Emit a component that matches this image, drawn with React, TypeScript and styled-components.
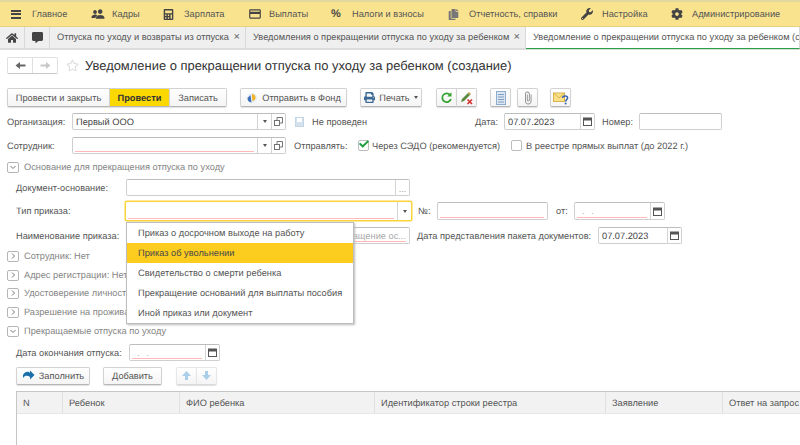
import React from "react";
import styled, { createGlobalStyle } from "styled-components";
import { FaHome, FaCalculator, FaWrench, FaCog, FaPrint, FaCommentAlt, FaRegStar, FaCheck, FaCopy } from "react-icons/fa";
import { IoPeople } from "react-icons/io5";
import { MdPayment, MdAttachFile } from "react-icons/md";

const Global = createGlobalStyle`
  html, body { margin: 0; padding: 0; background: #fff; }
  body { width: 800px; height: 445px; overflow: hidden; font-family: "Liberation Sans", Arial, sans-serif; font-size: 9.25px; color: #4c4c4c; text-rendering: geometricPrecision; }
  * { box-sizing: border-box; }
`;

const Page = styled.div`
  position: relative; width: 800px; height: 445px; overflow: hidden;
  display: flex; flex-direction: column;
`;
const TopBar = styled.div`
  height: 27px; flex: none; display: flex; align-items: center;
  background: #f9e38f; border-top: 2px solid #e3d7a0; border-bottom: 1px solid #e6d27e;
`;
const Section = styled.div<{ $w: number; $icon: number }>`
  width: ${p => p.$w}px; flex: none; display: flex; align-items: center; height: 100%; color: #555;
  white-space: nowrap; font-size: 9.25px;
  & > span:first-child { width: ${p => p.$icon}px; flex: none; display: flex; padding-left: ${p => p.$icon - 21}px; }
`;
const Pct = styled.span`font-weight: 700; font-size: 11px; color: #444; `;
const Burger = styled.div`
  width: 10px; height: 9px; border-top: 2px solid #444; border-bottom: 2px solid #444; position: relative;
  &::after { content: ""; position: absolute; left: 0; right: 0; top: 1.5px; height: 2px; background: #444; }
`;
const TabBar = styled.div`
  height: 23px; flex: none; display: flex; background: #efefef; border-bottom: 2px solid #dcdcdc;
`;
const IconTab = styled.div`
  width: 25px; flex: none; display: flex; align-items: center; justify-content: center; color: #444;
  border-right: 1px solid #d9d9d9;
`;
const Tab = styled.div<{ $w: number; $active?: boolean }>`
  width: ${p => p.$w}px; flex: none; display: flex; align-items: center; justify-content: space-between;
  padding: 0 5px 1px 7px; white-space: nowrap; overflow: hidden; font-size: 9.25px; color: #555;
  border-right: 1px solid #d9d9d9;
  ${p => p.$active ? "background:#fff; border-bottom: 1.5px solid #27a047; margin-bottom: -1px; padding-right: 0;" : ""}
`;
const Close = styled.span`font-size: 11px; color: #666; margin-left: 4px;`;
const TitleRow = styled.div`
  height: 38px; flex: none; display: flex; align-items: center; padding: 0 0 8px 7px;
`;
const NavGroup = styled.div`
  display: flex; width: 51px; height: 17px; border: 1px solid #e0e0e0; border-bottom-color: #c8c8c8; border-radius: 2px; background: #fff;
`;
const NavBtn = styled.div`
  flex: 1; display: flex; align-items: center; justify-content: center;
  & + & { border-left: 1px solid #e0e0e0; }
`;
const Star = styled.div`margin-left: 8px; color: #dedede; display: flex; font-size: 13px;`;
const Title = styled.h1`
  margin: 0 0 0 6px; font-weight: 400; font-size: 12.95px; color: #333; white-space: nowrap;
`;
const CommandBar = styled.div`
  height: 19px; margin-top: 0; flex: none; display: flex; padding-left: 7px;
`;
const BtnGroup = styled.div<{ $ml?: number }>`
  display: flex; margin-left: ${p => p.$ml ?? 0}px; height: 19px;
`;
const Btn = styled.div<{ $w: number; $main?: boolean; $h?: number; $light?: boolean }>`
  width: ${p => p.$w}px; height: ${p => p.$h ?? 19}px; flex: none; display: flex; align-items: center; justify-content: center; gap: 4px;
  border: 1px solid ${p => p.$light ? "#e6e6e6" : "#d2d2d2"}; border-bottom-color: ${p => p.$light ? "#d8d8d8" : "#b5b5b5"}; margin-left: -1px;
  background: ${p => p.$main ? "#fbd800" : "linear-gradient(#fff,#f4f4f4)"};
  color: ${p => p.$main ? "#333" : "#555"}; font-weight: ${p => p.$main ? 700 : 400};
  font-size: 9.25px; white-space: nowrap; box-shadow: 0 1px 1px #e2e2e2;
  &:first-child { margin-left: 0; border-radius: 2px 0 0 2px; }
  &:last-child { border-radius: 0 2px 2px 0; }
  &:only-child { border-radius: 2px; }
`;
const Row = styled.div<{ $h: number; $mt: number; $pl?: number }>`
  height: ${p => p.$h}px; margin-top: ${p => p.$mt}px; padding-left: ${p => p.$pl ?? 7}px; flex: none; display: flex; align-items: center;
`;
const Label = styled.div<{ $w?: number; $ml?: number }>`
  ${p => p.$w ? `width:${p.$w}px;` : ""} flex: none; margin-left: ${p => p.$ml ?? 0}px; white-space: nowrap; color: #555; font-size: 9.25px;
`;
const Field = styled.div<{ $w: number; $ml?: number; $focus?: boolean; $h?: number }>`
  width: ${p => p.$w}px; height: ${p => p.$h ?? 17}px; flex: none; margin-left: ${p => p.$ml ?? 0}px; display: flex;
  border: 1px solid ${p => p.$focus ? "#fbd33a" : "#cfcfcf"}; ${p => p.$focus ? "box-shadow: 0 0 0 0.5px #fbd33a;" : "border-top-color:#bdbdbd;"}
  border-radius: 2px; background: #fff;
`;
const FieldBody = styled.div<{ $req?: boolean; $end?: boolean }>`
  flex: 1; min-width: 0; padding: 0 3px; display: flex; align-items: center; position: relative; font-size: 9.25px; color: #444; white-space: nowrap; overflow: hidden;
  ${p => p.$end ? "justify-content: flex-end;" : ""}
  ${p => p.$req ? `&::after { content:""; position:absolute; left:2px; right:3px; bottom:1px; height:1px; background:#ffb9b9; }` : ""}
`;
const FieldBtn = styled.div<{ $w?: number }>`
  width: ${p => p.$w ?? 14}px; flex: none; border-left: 1px solid #d4d4d4; display: flex; align-items: center; justify-content: center; color: #555;
`;
const Caret = styled.div`
  width: 0; height: 0; border-left: 2.5px solid transparent; border-right: 2.5px solid transparent; border-top: 3px solid #555;
`;
const Dots = styled.span`color: #999; font-size: 9px; line-height: 1; margin-top: 3px;`;
const Placeholder = styled.span`color: #aaa;`;
const Mask = styled.span`color: #aaa; padding-left: 4px; letter-spacing: 2px;`;
const Check = styled.div`
  width: 11px; height: 11px; flex: none; position: relative;
  border: 1px solid #bdbdbd; border-radius: 2px; background: #fff; color: #1f9d3f;
  & > svg { position: absolute; left: 0; top: -2px; }
`;
const Disk = styled.div`
  width: 9px; height: 10px; flex: none; margin-left: 9px; background: #d3e2ee; border: 1px solid #c4d5e3; position: relative;
  &::before { content: ""; position: absolute; left: 1px; right: 1px; top: 0; height: 4px; background: #fff; }
`;
const Toggle = styled.div`
  width: 12px; height: 11px; flex: none; border: 1px solid #b5b5b5; border-radius: 2px; display: flex; align-items: center; justify-content: center; background: #fff;
`;
const GroupTitle = styled.div`margin-left: 5px; color: #858585; font-size: 9.25px; white-space: nowrap;`;
const Dropdown = styled.div`
  position: absolute; left: 126px; top: 222px; width: 228px; height: 102px; background: #fff; z-index: 2;
  border: 1px solid #bdbdbd; box-shadow: 1px 1px 2px #bbb;
`;
const Option = styled.div<{ $sel?: boolean }>`
  height: 20px; display: flex; align-items: center; padding-left: 11px; font-size: 9.25px; white-space: nowrap; color: #555;
  ${p => p.$sel ? "background:#fccc1e; color:#4a4a4a;" : ""}
`;
const Table = styled.div`
  margin: 6px 0 0 16px; flex: 1; border-top: 1px solid #c6c6c6; border-left: 1px solid #c6c6c6;
`;
const Head = styled.div`
  height: 22px; display: flex; background: #f2f2f2; border-bottom: 1px solid #e6e6e6;
`;
const Col = styled.div<{ $w: number }>`
  width: ${p => p.$w}px; flex: none; display: flex; align-items: center; padding-left: 6px; font-size: 9.25px; color: #555; white-space: nowrap;
  border-right: 1px solid #e0e0e0;
  &:last-child { border-right: none; }
`;

const Chev = ({ open }: { open?: boolean }) => (
  <svg width="8" height="8" viewBox="0 0 8 8" fill="none" stroke="#777" strokeWidth="1">
    <path d={open ? "M1.5 3 L4 5.5 L6.5 3" : "M3 1.5 L5.5 4 L3 6.5"} />
  </svg>
);
const Cal = () => (
  <svg width="9" height="9" viewBox="0 0 9 9">
    <rect x="0.5" y="1" width="8" height="7.5" fill="#fff" stroke="#555" />
    <rect x="0.5" y="1" width="8" height="2.5" fill="#555" />
  </svg>
);
const OpenIco = () => (
  <svg width="9" height="9" viewBox="0 0 9 9" fill="none" stroke="#666" strokeWidth="0.9">
    <rect x="0.5" y="3.5" width="5" height="5" />
    <path d="M3 3.5V0.5H8.5V6H5.5" />
  </svg>
);
const Fund = () => (
  <svg width="12" height="12" viewBox="0 0 12 12">
    <circle cx="6" cy="6" r="5" fill="#e8eef6" />
    <path d="M1.5 6a4.5 4.5 0 0 0 4 4.5L4.5 3z" fill="#3f6fb5" />
    <path d="M6 2c2 0 3.5 1.6 3.5 3.6S8 9 6.5 9L6 5z" fill="#f0b429" />
  </svg>
);
const Refresh = () => (
  <svg width="13" height="13" viewBox="0 0 13 13" fill="none">
    <path d="M10.3 4.2A4.4 4.4 0 1 0 10.9 8" stroke="#35a32f" strokeWidth="1.8" />
    <path d="M11.5 1.2v4.2H7.3z" fill="#35a32f" />
  </svg>
);
const PenX = () => (
  <svg width="15" height="14" viewBox="0 0 15 14">
    <path d="M2 11 L3 8 L9 2 L11 4 L5 10z" fill="#5a8a3c" />
    <path d="M9 2 L10 1 L12 3 L11 4z" fill="#c79a3a" />
    <path d="M8.5 8.5 L13 13 M13 8.5 L8.5 13" stroke="#d2322d" strokeWidth="1.6" />
  </svg>
);
const ListDoc = () => (
  <svg width="10" height="14" viewBox="0 0 10 14">
    <rect x="0.5" y="0.5" width="9" height="13" fill="#dbe6f2" stroke="#8eaccb" />
    <path d="M2 3.5h6M2 6h6M2 8.5h6M2 11h6" stroke="#7f9fc2" />
  </svg>
);
const Mail = () => (
  <svg width="16" height="14" viewBox="0 0 16 14">
    <rect x="0.5" y="2" width="11" height="8.5" fill="#fbe08a" stroke="#d9b24c" />
    <path d="M0.5 2 L6 7 L11.5 2" fill="none" stroke="#d9b24c" />
    <path d="M9.6 7 C9.6 4.4 14.6 4.4 14.6 7 C14.6 8.6 12.6 8.6 12.6 10.4" fill="none" stroke="#3a62b0" strokeWidth="1.5" />
    <circle cx="12.6" cy="12.6" r="1" fill="#3a62b0" />
  </svg>
);
const Arrow = ({ dir, color }: { dir: "up" | "down"; color: string }) => (
  <svg width="11" height="11" viewBox="0 0 11 11">
    <path d={dir === "up" ? "M5.5 1 L10 6 H7 V10 H4 V6 H1z" : "M5.5 10 L10 5 H7 V1 H4 V5 H1z"} fill={color} />
  </svg>
);
const NavArrow = ({ left, color }: { left?: boolean; color: string }) => (
  <svg width="11" height="9" viewBox="0 0 11 9">
    <path d={left ? "M0.5 4.5 L5 1 V3.5 H10.5 V5.5 H5 V8z" : "M10.5 4.5 L6 1 V3.5 H0.5 V5.5 H6 V8z"} fill={color} />
  </svg>
);
const FillIco = () => (
  <svg width="13" height="11" viewBox="0 0 13 11">
    <path d="M1 5 C3 1 7 1 8 3 L8 0.5 L12.5 5 L8 9.5 L8 7 C6 5.5 3 5 1 8z" fill="#1c6fa8" />
  </svg>
);

const sections = [
  { w: 84, icon: 32, text: "Главное", ico: <Burger /> },
  { w: 72, icon: 28, text: "Кадры", ico: <IoPeople size={14} color="#444" /> },
  { w: 85, icon: 28, text: "Зарплата", ico: <FaCalculator size={11} color="#444" /> },
  { w: 83, icon: 28, text: "Выплаты", ico: <MdPayment size={14} color="#444" /> },
  { w: 114, icon: 28, text: "Налоги и взносы", ico: <Pct>%</Pct> },
  { w: 133, icon: 31, text: "Отчетность, справки", ico: <FaCopy size={11} color="#777" /> },
  { w: 90, icon: 31, text: "Настройка", ico: <FaWrench size={12} color="#444" /> },
  { w: 139, icon: 31, text: "Администрирование", ico: <FaCog size={12} color="#444" /> },
];
const options = ["Приказ о досрочном выходе на работу", "Приказ об увольнении", "Свидетельство о смерти ребенка", "Прекращение оснований для выплаты пособия", "Иной приказ или документ"];
const cols: [string, number][] = [["N", 46], ["Ребенок", 117], ["ФИО ребенка", 195], ["Идентификатор строки реестра", 231], ["Заявление", 117], ["Ответ на запрос", 90]];

const Group = ({ open, text, mt }: { open?: boolean; text: string; mt: number }) => (
  <Row $h={12} $mt={mt}>
    <Toggle><Chev open={open} /></Toggle>
    <GroupTitle>{text}</GroupTitle>
  </Row>
);

export default function App() {
  return (
    <Page>
      <Global />
      <TopBar>
        {sections.map(s => (
          <Section key={s.text} $w={s.w} $icon={s.icon}>
            <span>{s.ico}</span>
            <span>{s.text}</span>
          </Section>
        ))}
      </TopBar>
      <TabBar>
        <IconTab><FaHome size={12} /></IconTab>
        <IconTab><FaCommentAlt size={11} /></IconTab>
        <Tab $w={196}>Отпуска по уходу и возвраты из отпуска<Close>×</Close></Tab>
        <Tab $w={280}>Уведомления о прекращении отпуска по уходу за ребенком<Close>×</Close></Tab>
        <Tab $w={274} $active>Уведомление о прекращении отпуска по уходу за ребенком (создание)</Tab>
      </TabBar>
      <TitleRow>
        <NavGroup>
          <NavBtn><NavArrow left color="#666" /></NavBtn>
          <NavBtn><NavArrow color="#c8c8c8" /></NavBtn>
        </NavGroup>
        <Star><FaRegStar /></Star>
        <Title>Уведомление о прекращении отпуска по уходу за ребенком (создание)</Title>
      </TitleRow>
      <CommandBar>
        <BtnGroup>
          <Btn $w={103}>Провести и закрыть</Btn>
          <Btn $w={61} $main>Провести</Btn>
          <Btn $w={58}>Записать</Btn>
        </BtnGroup>
        <BtnGroup $ml={13}>
          <Btn $w={107}><Fund />Отправить в Фонд</Btn>
        </BtnGroup>
        <BtnGroup $ml={13}>
          <Btn $w={62}><FaPrint size={11} color="#3b6a94" />Печать<Caret /></Btn>
        </BtnGroup>
        <BtnGroup $ml={14}>
          <Btn $w={21}><Refresh /></Btn>
          <Btn $w={21}><PenX /></Btn>
        </BtnGroup>
        <BtnGroup $ml={13}>
          <Btn $w={21}><ListDoc /></Btn>
        </BtnGroup>
        <BtnGroup $ml={6}>
          <Btn $w={21}><MdAttachFile size={14} color="#888" /></Btn>
        </BtnGroup>
        <BtnGroup $ml={12}>
          <Btn $w={21}><Mail /></Btn>
        </BtnGroup>
      </CommandBar>
      <Row $h={17} $mt={6}>
        <Label $w={65}>Организация:</Label>
        <Field $w={214}>
          <FieldBody>Первый ООО</FieldBody>
          <FieldBtn><Caret /></FieldBtn>
          <FieldBtn><OpenIco /></FieldBtn>
        </Field>
        <Disk />
        <Label $w={163} $ml={8}>Не проведен</Label>
        <Label $w={29}>Дата:</Label>
        <Field $w={91}>
          <FieldBody>07.07.2023</FieldBody>
          <FieldBtn><Cal /></FieldBtn>
        </Field>
        <Label $w={37} $ml={7}>Номер:</Label>
        <Field $w={83} />
      </Row>
      <Row $h={17} $mt={7}>
        <Label $w={65}>Сотрудник:</Label>
        <Field $w={214}>
          <FieldBody $req />
          <FieldBtn><Caret /></FieldBtn>
          <FieldBtn><OpenIco /></FieldBtn>
        </Field>
        <Label $w={64} $ml={8}>Отправлять:</Label>
        <Check><FaCheck size={10} /></Check>
        <Label $w={139} $ml={3}>Через СЭДО (рекомендуется)</Label>
        <Check />
        <Label $ml={4}>В реестре прямых выплат (до 2022 г.)</Label>
      </Row>
      <Group open text="Основание для прекращения отпуска по уходу" mt={7} />
      <Row $h={17} $mt={6} $pl={16}>
        <Label $w={110}>Документ-основание:</Label>
        <Field $w={284}>
          <FieldBody />
          <FieldBtn><Dots>...</Dots></FieldBtn>
        </Field>
      </Row>
      <Row $h={20} $mt={5} $pl={16}>
        <Label $w={109}>Тип приказа:</Label>
        <Field $w={287} $focus $h={20}>
          <FieldBody $req />
          <FieldBtn><Caret /></FieldBtn>
        </Field>
        <Label $w={19} $ml={6}>№:</Label>
        <Field $w={111} $h={18}>
          <FieldBody $req />
        </Field>
        <Label $w={18} $ml={8}>от:</Label>
        <Field $w={91} $h={18}>
          <FieldBody $req><Mask>. .</Mask></FieldBody>
          <FieldBtn><Cal /></FieldBtn>
        </Field>
      </Row>
      <Row $h={17} $mt={6} $pl={16}>
        <Label $w={110}>Наименование приказа:</Label>
        <Field $w={284}>
          <FieldBody $req $end><Placeholder>Прекращение ос...</Placeholder></FieldBody>
        </Field>
        <Label $w={181} $ml={7}>Дата представления пакета документов:</Label>
        <Field $w={84}>
          <FieldBody>07.07.2023</FieldBody>
          <FieldBtn><Cal /></FieldBtn>
        </Field>
      </Row>
      <Group text="Сотрудник: Нет" mt={6} />
      <Group text="Адрес регистрации: Нет" mt={7} />
      <Group text="Удостоверение личности" mt={6} />
      <Group text="Разрешение на проживание" mt={7} />
      <Group open text="Прекращаемые отпуска по уходу" mt={7} />
      <Row $h={17} $mt={7} $pl={16}>
        <Label $w={113}>Дата окончания отпуска:</Label>
        <Field $w={91}>
          <FieldBody $req><Mask>. .</Mask></FieldBody>
          <FieldBtn><Cal /></FieldBtn>
        </Field>
      </Row>
      <Row $h={18} $mt={6} $pl={16}>
        <BtnGroup>
          <Btn $w={74} $h={18}><FillIco />Заполнить</Btn>
        </BtnGroup>
        <BtnGroup $ml={13}>
          <Btn $w={59} $h={18}>Добавить</Btn>
        </BtnGroup>
        <BtnGroup $ml={14}>
          <Btn $w={21} $h={18} $light><Arrow dir="up" color="#a9cfe8" /></Btn>
          <Btn $w={21} $h={18} $light><Arrow dir="down" color="#a9cfe8" /></Btn>
        </BtnGroup>
      </Row>
      <Table>
        <Head>
          {cols.map(([t, w]) => <Col key={t} $w={w}>{t}</Col>)}
        </Head>
      </Table>
      <Dropdown>
        {options.map((o, i) => <Option key={o} $sel={i === 1}>{o}</Option>)}
      </Dropdown>
    </Page>
  );
}
